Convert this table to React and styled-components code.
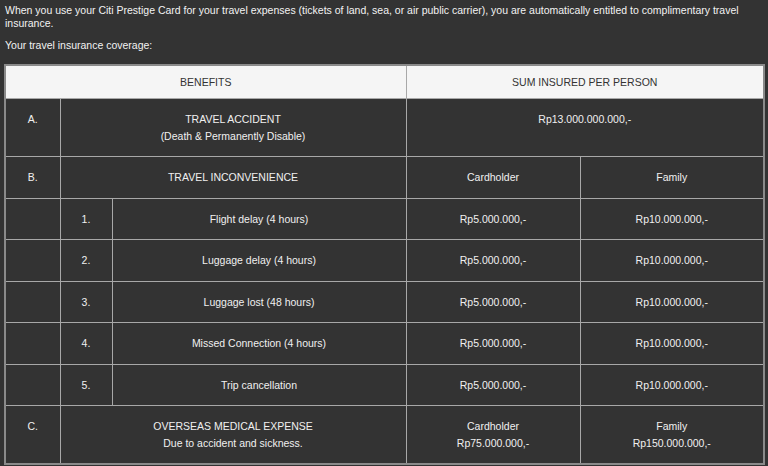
import React from "react";
import styled, { createGlobalStyle } from "styled-components";

const Global = createGlobalStyle`
  html, body { margin: 0; padding: 0; background: #333333; }
  body { font-family: "Liberation Sans", Arial, sans-serif; }
`;

const Page = styled.div`
  padding: 4px 0 0 5px;
  width: 768px;
  box-sizing: border-box;
  color: #f2f2f2;
  font-size: 10.5px;
  line-height: 12.5px;
`;

const Para = styled.p`
  margin: 0 ${(p) => (p.$wide ? "10px" : "0")} 10px 0;
`;

const Table = styled.table`
  margin-top: 12px;
  margin-left: -1px;
  width: 761px;
  border-collapse: collapse;
  table-layout: fixed;
  border: 2px solid #8a8a8a;
  font-size: 10.5px;
  line-height: 16.5px;
`;

const HeadCell = styled.th`
  background: #f5f5f5;
  color: #333;
  font-weight: normal;
  text-align: center;
  padding: 8px 4px 8px;
  border: 1px solid #a8a8a8;
`;

const Cell = styled.td`
  text-align: center;
  vertical-align: top;
  padding: 12px 4px;
  border: 1px solid #a8a8a8;
  color: #f0f0f0;
`;

const Line = styled.div``;

const subs = [
  ["1.", "Flight delay (4 hours)"],
  ["2.", "Luggage delay (4 hours)"],
  ["3.", "Luggage lost (48 hours)"],
  ["4.", "Missed Connection (4 hours)"],
  ["5.", "Trip cancellation"],
];

export default function App() {
  return (
    <Page>
      <Global />
      <Para $wide>
        When you use your Citi Prestige Card for your travel expenses (tickets of land, sea, or air public carrier), you are automatically entitled to complimentary travel insurance.
      </Para>
      <Para>Your travel insurance coverage:</Para>
      <Table>
        <colgroup>
          <col style={{ width: 55 }} />
          <col style={{ width: 52 }} />
          <col style={{ width: 294 }} />
          <col style={{ width: 174 }} />
          <col />
        </colgroup>
        <tbody>
          <tr>
            <HeadCell colSpan={3}>BENEFITS</HeadCell>
            <HeadCell colSpan={2}>SUM INSURED PER PERSON</HeadCell>
          </tr>
          <tr>
            <Cell>A.</Cell>
            <Cell colSpan={2}>
              <Line>TRAVEL ACCIDENT</Line>
              <Line>(Death &amp; Permanently Disable)</Line>
            </Cell>
            <Cell colSpan={2}>Rp13.000.000.000,-</Cell>
          </tr>
          <tr>
            <Cell>B.</Cell>
            <Cell colSpan={2}>TRAVEL INCONVENIENCE</Cell>
            <Cell>Cardholder</Cell>
            <Cell>Family</Cell>
          </tr>
          {subs.map(([n, label]) => (
            <tr key={n}>
              <Cell />
              <Cell>{n}</Cell>
              <Cell>{label}</Cell>
              <Cell>Rp5.000.000,-</Cell>
              <Cell>Rp10.000.000,-</Cell>
            </tr>
          ))}
          <tr>
            <Cell>C.</Cell>
            <Cell colSpan={2}>
              <Line>OVERSEAS MEDICAL EXPENSE</Line>
              <Line>Due to accident and sickness.</Line>
            </Cell>
            <Cell>
              <Line>Cardholder</Line>
              <Line>Rp75.000.000,-</Line>
            </Cell>
            <Cell>
              <Line>Family</Line>
              <Line>Rp150.000.000,-</Line>
            </Cell>
          </tr>
        </tbody>
      </Table>
    </Page>
  );
}
